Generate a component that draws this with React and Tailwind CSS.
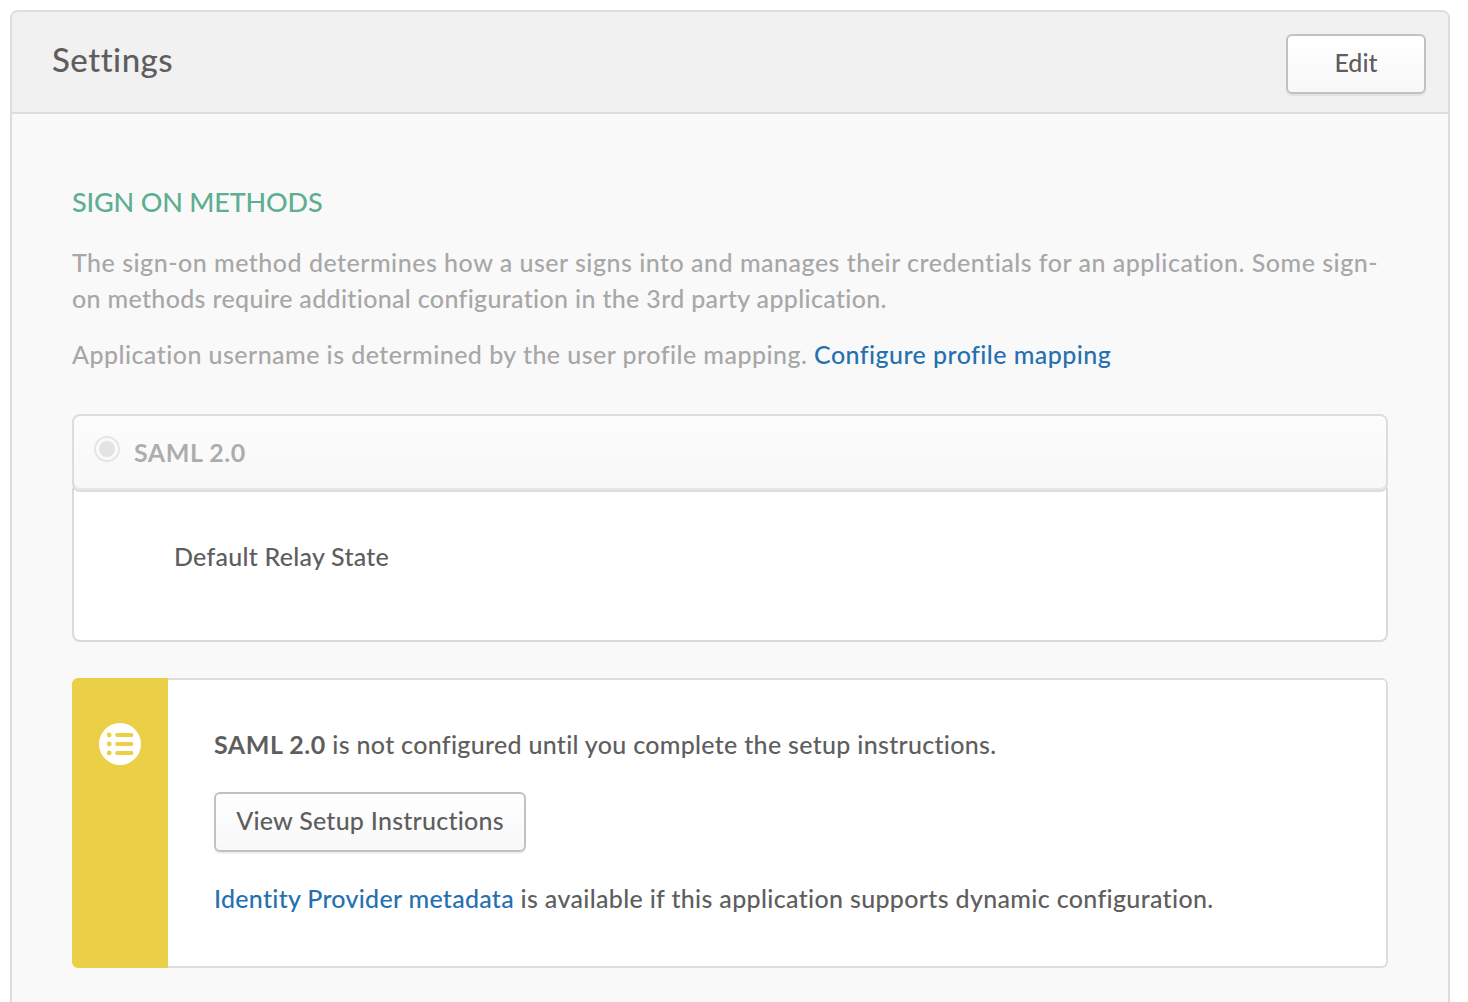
import React from "react";

function Button({ children, className }) {
  return (
    <button
      type="button"
      className={`flex h-[60px] items-center justify-center rounded-[6px] border-2 border-[#c1c1c1] bg-linear-to-b from-white to-[#f8f8f8] pb-1 shadow-[0_2px_0_rgba(0,0,0,0.06)] ${className}`}
    >
      {children}
    </button>
  );
}

function ListIcon() {
  return (
    <svg width="42" height="42" viewBox="0 0 42 42" aria-hidden="true">
      <circle cx="21" cy="21" r="21" fill="#fff" />
      <g fill="#ebd047">
        {[12, 21, 30].map((y) => (
          <React.Fragment key={y}>
            <circle cx="10.2" cy={y} r="2.4" />
            <rect x="16.2" y={y - 1.9} width="18.2" height="3.8" rx="1.9" />
          </React.Fragment>
        ))}
      </g>
    </svg>
  );
}

export default function App() {
  return (
    <div className="h-[1002px] overflow-hidden bg-white pt-2.5 pl-2.5 font-['Lato',sans-serif] text-[25px] leading-9 font-medium text-[#5e5e5e]">
      <main className="h-[1040px] w-[1440px] overflow-hidden rounded-[8px] border-2 border-[#dddddd] bg-[#f9f9f9]">
        <header className="flex h-[102px] items-start justify-between border-b-2 border-[#dddddd] bg-[#f1f1f1] pt-[22px] pr-[22px] pl-10">
          <h1 className="pt-[3px] text-[33px] leading-[44px] tracking-[0.5px]">Settings</h1>
          <Button className="w-[140px]">Edit</Button>
        </header>

        <div className="px-[60px] pt-[69px]">
          <h2 className="text-[27px] leading-[38px] tracking-[-0.17px] text-[#5fae91]">SIGN ON METHODS</h2>
          <div className="mt-[23px] whitespace-nowrap text-[#a7a7a7]">
            <p>
              <span className="tracking-[0.5px]">
                The sign-on method determines how a user signs into and manages their credentials for an application. Some sign-
              </span>
              <br />
              <span className="tracking-[0.33px]">
                on methods require additional configuration in the 3rd party application.
              </span>
            </p>
            <p className="mt-5">
              <span className="tracking-[0.455px]">Application username is determined by the user profile mapping. </span>
              <a href="#" className="tracking-[0.44px] text-[#2670b0]">Configure profile mapping</a>
            </p>
          </div>

          <section className="mt-[42px]">
            <label className="relative flex h-[78px] items-start rounded-[8px] border-2 border-[#dddddd] bg-linear-to-b from-[#fcfcfc] to-[#f8f8f8] pl-5 shadow-[inset_0_-2px_0_#e6e6e6]">
              <span className="mt-5 flex size-[26px] items-center justify-center rounded-full border-2 border-[#e5e5e5] bg-[#fafafa]">
                <span className="size-4 rounded-full bg-[#e3e3e3]" />
              </span>
              <span className="mt-[18px] ml-3.5 font-bold tracking-[0.52px] text-[#adadad]">SAML 2.0</span>
            </label>
            <div className="-mt-1 h-[154px] rounded-b-[8px] border-x-2 border-b-2 border-[#dadada] bg-white pt-[50px] pl-[100px]">
              <span className="tracking-[0.26px]">Default Relay State</span>
            </div>
          </section>

          <section className="mt-9 flex h-[290px] overflow-hidden rounded-[6px]">
            <div className="flex w-24 justify-center bg-[#ebd047] pt-[45px]">
              <ListIcon />
            </div>
            <div className="flex-1 rounded-r-[6px] border-y-2 border-r-2 border-[#dddddd] bg-white pt-[46px] pl-[46px] whitespace-nowrap">
              <p>
                <strong className="font-bold tracking-[0.52px]">SAML 2.0</strong>
                <span className="tracking-[0.305px]"> is not configured until you complete the setup instructions.</span>
              </p>
              <Button className="mt-[30px] w-[312px] tracking-[0.25px]">View Setup Instructions</Button>
              <p className="mt-7">
                <a href="#" className="tracking-[0.28px] text-[#2670b0]">Identity Provider metadata</a>
                <span className="tracking-[0.33px]"> is available if this application supports dynamic configuration.</span>
              </p>
            </div>
          </section>
        </div>
      </main>
    </div>
  );
}
